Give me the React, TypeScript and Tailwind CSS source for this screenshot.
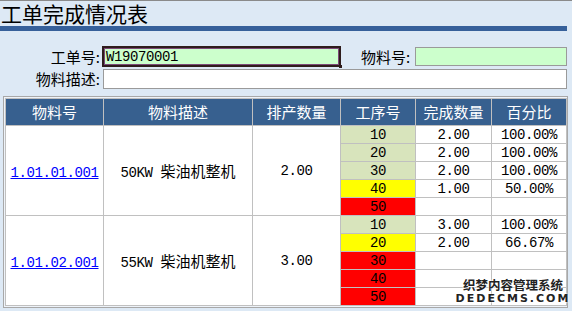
import React from "react";

const cjk = "font-['Noto_Sans_CJK_SC',sans-serif]";
const mono = "font-['Liberation_Mono','Noto_Sans_CJK_SC',monospace]";
const num = `text-[14px] leading-[16px] tracking-[-0.4px] ${mono}`;

type Step = { no: string; done: string; pct: string; c: "g" | "y" | "r" };
type Group = { code: string; kw: string; qty: string; steps: Step[] };

const groups: Group[] = [
  {
    code: "1.01.01.001",
    kw: "50KW",
    qty: "2.00",
    steps: [
      { no: "10", done: "2.00", pct: "100.00%", c: "g" },
      { no: "20", done: "2.00", pct: "100.00%", c: "g" },
      { no: "30", done: "2.00", pct: "100.00%", c: "g" },
      { no: "40", done: "1.00", pct: "50.00%", c: "y" },
      { no: "50", done: "", pct: "", c: "r" },
    ],
  },
  {
    code: "1.01.02.001",
    kw: "55KW",
    qty: "3.00",
    steps: [
      { no: "10", done: "3.00", pct: "100.00%", c: "g" },
      { no: "20", done: "2.00", pct: "66.67%", c: "y" },
      { no: "30", done: "", pct: "", c: "r" },
      { no: "40", done: "", pct: "", c: "r" },
      { no: "50", done: "", pct: "", c: "r" },
    ],
  },
];

const bgFor = (c: Step["c"]) =>
  c === "g" ? "bg-[#d8e4bc]" : c === "y" ? "bg-[#ffff00]" : "bg-[#ff0000]";

export default function App() {
  const td = "border border-[#c0c0c0] p-0 text-center align-middle";
  const th = `border border-[#c0c0c0] p-0 text-center align-middle font-normal text-white text-[15px] leading-[18px] ${cjk}`;
  return (
    <div className="relative w-[572px] h-[311px] overflow-hidden bg-[#dde9f5] border-t border-[#8a8a8a] text-black">
      <div className={`pl-[1px] h-[25px] text-[21px] leading-[25px] ${cjk}`}>工单完成情况表</div>
      <div className="h-[5px] w-[567px] bg-[#36609a]" />

      <div className="mt-[15px] flex items-center h-[21px]">
        <div className={`w-[100px] text-right text-[15px] leading-[18px] ${cjk}`}>工单号:</div>
        <div className="relative ml-[2px] w-[239px] h-[21px] border-2 border-[#2e1c1c] bg-[#ccffcc] shadow-[inset_0_0_0_1px_#7c4a78] flex items-center">
          <span className={`pl-[2px] ${num}`}>W19070001</span>
          <div className="absolute right-[-3px] bottom-[-3px] w-[3px] h-[3px] bg-[#2e1c1c]" />
        </div>
        <div className={`ml-[20px] w-[52px] text-[15px] leading-[18px] ${cjk}`}>物料号:</div>
        <div className="ml-[2px] w-[152px] h-[19px] border border-[#9a9a9a] bg-[#ccffcc]" />
      </div>
      <div className="mt-[2px] flex items-center h-[20px]">
        <div className={`w-[100px] text-right text-[15px] leading-[18px] ${cjk}`}>物料描述:</div>
        <div className="ml-[3px] w-[464px] h-[20px] border border-[#9a9a9a] bg-white" />
      </div>

      <div className="mt-[7px] ml-[3px] w-[565px] border border-[#a8a8a8] p-[1px] bg-[#eef3f9]">
        <table className="border-collapse table-fixed w-[561px] bg-white">
          <colgroup>
            <col className="w-[98px]" />
            <col className="w-[149px]" />
            <col className="w-[88px]" />
            <col className="w-[75px]" />
            <col className="w-[76px]" />
            <col className="w-[75px]" />
          </colgroup>
          <thead>
            <tr className="h-[27px] bg-[#37608f]">
              <th className={th}>物料号</th>
              <th className={th}>物料描述</th>
              <th className={th}>排产数量</th>
              <th className={th}>工序号</th>
              <th className={th}>完成数量</th>
              <th className={th}>百分比</th>
            </tr>
          </thead>
          <tbody>
            {groups.map((g) =>
              g.steps.map((s, i) => (
                <tr key={g.code + s.no} className="h-[18px]">
                  {i === 0 && (
                    <>
                      <td rowSpan={5} className={td}>
                        <a href="#" className={`text-[#0000ff] underline ${num}`}>
                          {g.code}
                        </a>
                      </td>
                      <td rowSpan={5} className={td}>
                        <span className={num}>{g.kw} </span>
                        <span className={`text-[15px] leading-[18px] ${cjk}`}>柴油机整机</span>
                      </td>
                      <td rowSpan={5} className={`${td} ${num}`}>{g.qty}</td>
                    </>
                  )}
                  <td className={`${td} ${bgFor(s.c)} ${num}`}>{s.no}</td>
                  <td className={`${td} ${num}`}>{s.done}</td>
                  <td className={`${td} ${num}`}>{s.pct}</td>
                </tr>
              ))
            )}
          </tbody>
        </table>
      </div>

      <div className="absolute left-[461px] top-[277px] w-[104px] flex flex-col items-center pointer-events-none whitespace-nowrap">
        <div className={`text-[12.5px] leading-[14px] font-bold text-[#222] [text-shadow:0_0_2px_#fff,0_0_2px_#fff,0_0_1px_#fff] ${cjk}`}>
          织梦内容管理系统
        </div>
        <div className="mt-[1px] text-[11px] leading-[12px] font-bold tracking-[2px] text-[#222] [text-shadow:0_0_2px_#fff,0_0_2px_#fff] font-['DejaVu_Sans',sans-serif]">
          DEDECMS.COM
        </div>
      </div>
    </div>
  );
}
